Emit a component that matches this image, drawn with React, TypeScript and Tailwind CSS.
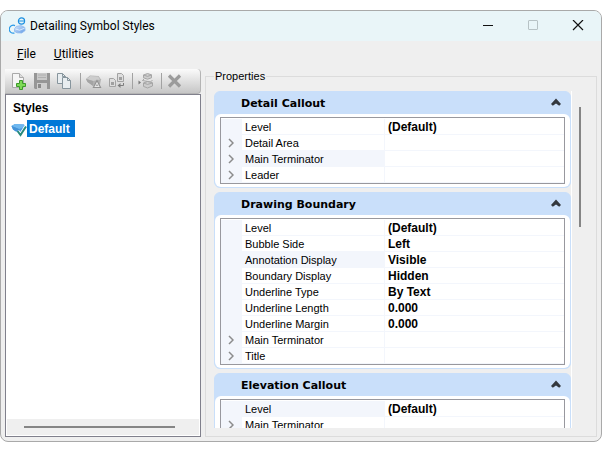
import { useState } from 'react'
import type { ReactNode } from 'react'

type Row = { name: string; value?: string; expandable?: boolean; tinted?: boolean }
type Section = { title: string; rows: Row[] }

const sections: Section[] = [
  {
    title: 'Detail Callout',
    rows: [
      { name: 'Level', value: '(Default)' },
      { name: 'Detail Area', expandable: true },
      { name: 'Main Terminator', expandable: true, tinted: true },
      { name: 'Leader', expandable: true }
    ]
  },
  {
    title: 'Drawing Boundary',
    rows: [
      { name: 'Level', value: '(Default)' },
      { name: 'Bubble Side', value: 'Left' },
      { name: 'Annotation Display', value: 'Visible', tinted: true },
      { name: 'Boundary Display', value: 'Hidden' },
      { name: 'Underline Type', value: 'By Text' },
      { name: 'Underline Length', value: '0.000' },
      { name: 'Underline Margin', value: '0.000' },
      { name: 'Main Terminator', expandable: true },
      { name: 'Title', expandable: true }
    ]
  },
  {
    title: 'Elevation Callout',
    rows: [
      { name: 'Level', value: '(Default)', tinted: true },
      { name: 'Main Terminator', expandable: true }
    ]
  }
]

function AppIcon() {
  return (
    <svg width="18" height="18" viewBox="0 0 18 18" fill="none">
      <defs>
        <linearGradient id="cloud" x1="0" y1="0" x2="1" y2="1">
          <stop offset="0" stopColor="#d6e6fb" />
          <stop offset="1" stopColor="#5f9be6" />
        </linearGradient>
      </defs>
      <circle cx="12.5" cy="4" r="3.1" stroke="#1b8fe0" strokeWidth="1.2" />
      <path d="M9.4 4h6.2" stroke="#1b8fe0" strokeWidth="1.2" />
      <path d="M6 8.6A4 4 0 1 0 5.5 16" stroke="#2b9ae8" strokeWidth="1.2" />
      <path d="M5.5 12l1.8-2.6 4.7-.8 3.8 1.8.3 3.2-3.4 2.4-4.6-.2-2.6-1.4z" fill="url(#cloud)" stroke="#8db8ee" strokeWidth=".8" />
      <path d="M6.5 12l4 1.2 5-2" stroke="#eef5fe" strokeWidth=".8" />
    </svg>
  )
}

function NewIcon() {
  return (
    <svg width="18" height="18" viewBox="0 0 18 18" fill="none">
      <path d="M2.5 1.5h7l4 4v10h-11z" fill="#f5f5f5" stroke="#a9a9a9" />
      <path d="M9.5 1.5v4h4" fill="#ddd" stroke="#a9a9a9" />
      <path d="M9.5 8.5h3v3h3v3h-3v3h-3v-3h-3v-3h3z" fill="#7ed957" stroke="#3c9a2a" />
    </svg>
  )
}

function SaveIcon() {
  return (
    <svg width="18" height="18" viewBox="0 0 18 18">
      <path d="M1 1h16v16H2l-1-1z" fill="#969696" />
      <path d="M4 1h10v7H4z" fill="#c9c9c9" />
      <path d="M5 3h8M5 5.5h8" stroke="#b0b0b0" />
      <path d="M4 11h10v6H4z" fill="#cecece" />
      <path d="M5 12h3v4H5z" fill="#8a8a8a" />
    </svg>
  )
}

function CopyIcon() {
  return (
    <svg width="18" height="18" viewBox="0 0 18 18" fill="#e8edf0" stroke="#87959d">
      <path d="M1.5 1.5h5l3 3v7h-8z" />
      <path d="M6.5 1.5v3h3" fill="none" />
      <path d="M6.500 5.500h5l3 3v8h-8z" />
      <path d="M11.500 5.500v3h3" fill="none" />
    </svg>
  )
}

function RenameIcon() {
  return (
    <svg width="18" height="18" viewBox="0 0 18 18">
      <path d="M1 7l4-3.5 8.5.5 2.5 3.5-1 5-6.5 1.5L2.5 10z" fill="#b0b0b0" />
      <path d="M1.5 7l3.8-3 7.8.6L15.2 7.5 8 9z" fill="#cdcdcd" />
      <path d="M1 7l7 2v5L2.5 10z" fill="#a4a4a4" />
      <path d="M12 8.5l3.6 7H8.4z" fill="#e6e6e6" stroke="#929292" strokeWidth="1.1" />
      <path d="M10.8 13.2h2.4" stroke="#929292" />
    </svg>
  )
}

function UpdateIcon() {
  return (
    <svg width="18" height="18" viewBox="0 0 18 18" fill="#dedede" stroke="#a3a3a3">
      <path d="M1.5 6.5h4l2 2v6h-6z" />
      <path d="M9.5 1.5h4l2 2v6h-6z" />
      <path d="M3 10h3v3H3zM11 5h3v3h-3z" fill="#a0a0a0" stroke="none" />
      <path d="M15.5 11v2.5h-4" fill="none" stroke="#7d7d7d" />
      <path d="M12.5 11v5l-3-2.5z" fill="#7d7d7d" stroke="none" />
    </svg>
  )
}

function SwapIcon() {
  return (
    <svg width="18" height="18" viewBox="0 0 18 18" fill="#cdcdcd" stroke="#a0a0a0" strokeWidth=".9">
      <path d="M6.5 3l4-1.5 4 1.3v3l-4 1.4-4-1.4z" />
      <path d="M6.5 3l4 1.4 4-1.4" fill="none" />
      <path d="M7 7L5.5 8.5l8 1.5 2-2" fill="none" />
      <path d="M6.5 11l4-1.5 5 1.3v3.2l-5 2-4-1.6z" />
      <path d="M6.5 11l4 1.4 5-1.4" fill="none" />
      <path d="M1.5 8.5v4L4 10.5z" fill="#777" stroke="none" />
    </svg>
  )
}

function DeleteIcon() {
  return (
    <svg width="18" height="18" viewBox="0 0 18 18">
      <path d="M3 3.5l11 11M14 3.5l-11 11" stroke="#9b9b9b" strokeWidth="3.2" />
    </svg>
  )
}

function StyleIcon() {
  return (
    <svg width="16" height="16" viewBox="0 0 16 16" fill="none">
      <path d="M.5 5L4 3l9 .5L14 6l-1 4-5 2.5-6-4z" fill="#4c9be0" />
      <path d="M.5 5L4 3l9 .5L14 6 8 8z" fill="#6fb8f0" />
      <path d="M.5 5L8 8v4.5l-6-4z" fill="#4593d8" />
      <path d="M6.5 10l3 4L15 5.5" stroke="#fff" strokeWidth="3.6" />
      <path d="M6.5 10l3 4L15 5.5" stroke="#258a7c" strokeWidth="2" />
    </svg>
  )
}

function ToolButton({ label, children }: { label: string; children: ReactNode }) {
  return (
    <button type="button" aria-label={label} className="flex h-[22px] w-[23px] items-center justify-center">
      {children}
    </button>
  )
}

function Divider() {
  return <span className="mr-px ml-1 h-4 w-px bg-[#a2a2a2]" />
}

function PropertySection({ title, rows }: Section) {
  const [open, setOpen] = useState(true)

  return (
    <section className="shrink-0 rounded-md border border-[#c9dffa] bg-[#c9dffa]">
      <header className="flex h-[22px] items-center justify-between pr-2 pl-[26px]">
        <h2 className="pt-px font-['DejaVu_Sans'] text-[11px] leading-4 font-bold">{title}</h2>
        <button type="button" aria-label={title} aria-expanded={open} onClick={() => setOpen(!open)}>
          <svg width="12" height="10" viewBox="0 0 12 10">
            <path d="M1 6L6 .5 11 6 9.200 7.700 6 5.400 2.800 7.700z" fill="#33383e" />
          </svg>
        </button>
      </header>
      {open && (
        <div className="rounded-md bg-white px-[5px] py-[3px]">
          <div className="border border-[#98989e] pt-px">
            <table className="w-full table-fixed border-separate border-spacing-0 text-left leading-[14px]">
              <colgroup>
                <col className="w-[21px]" />
                <col className="w-[143px]" />
                <col />
              </colgroup>
              <tbody>
                {rows.map((row) => (
                  <tr key={row.name} className="h-4">
                    <td className="bg-[#f3f6fc] p-0">
                      {row.expandable && (
                        <svg width="6" height="10" viewBox="0 0 6 10" className="ml-[7px]">
                          <path d="M1 1l4 4-4 4" fill="none" stroke="#8c8c8c" strokeWidth="1.5" />
                        </svg>
                      )}
                    </td>
                    <th
                      scope="row"
                      className={`border-r border-b border-[#f3f6fc] p-0 pt-px pl-[3px] text-[11px] font-normal ${row.tinted ? 'bg-[#f3f6fc]' : ''}`}
                    >
                      {row.name}
                    </th>
                    <td className="border-b border-[#f3f6fc] p-0 pt-px pl-[3px] text-[12px] font-bold">{row.value}</td>
                  </tr>
                ))}
              </tbody>
            </table>
          </div>
        </div>
      )}
    </section>
  )
}

export default function App() {
  return (
    <div className="h-screen bg-white py-[10px] font-['Liberation_Sans',sans-serif] text-black">
      <div className="flex h-full flex-col overflow-hidden rounded-lg border border-[#a9a9a9] bg-[#efefef]">
        {/* Title bar */}
        <header className="flex h-[30px] shrink-0 items-center bg-[#e9f5f8] pr-[17px] pl-2">
          <AppIcon />
          <h1 className="ml-[3px] flex-1 font-['Roboto',sans-serif] text-[12px] leading-4">Detailing Symbol Styles</h1>
          <div className="flex items-center gap-[33px]">
            <button type="button" aria-label="Minimize">
              <svg width="12" height="12" viewBox="0 0 12 12">
                <path d="M1 5.5h10" stroke="#111" />
              </svg>
            </button>
            <button type="button" aria-label="Maximize" disabled>
              <svg width="12" height="12" viewBox="0 0 12 12">
                <rect x="1.5" y=".5" width="9" height="9" rx=".5" fill="none" stroke="#b7c2c5" />
              </svg>
            </button>
            <button type="button" aria-label="Close">
              <svg width="12" height="12" viewBox="0 0 12 12">
                <path d="M1 0l10 10M11 0L1 10" stroke="#111" strokeWidth="1.2" />
              </svg>
            </button>
          </div>
        </header>

        {/* Menu */}
        <nav className="flex h-7 shrink-0 items-center gap-[18px] pb-0.5 pl-4 font-['Roboto',sans-serif] text-[12px] leading-4">
          <button type="button"><u>F</u>ile</button>
          <button type="button"><u>U</u>tilities</button>
        </nav>

        <div className="flex min-h-0 flex-1 gap-1 px-1 pb-1">
          {/* Styles list */}
          <div className="flex w-[196px] shrink-0 flex-col">
            <div className="flex h-[25px] shrink-0 items-center rounded-r-sm border-r border-b border-[#b4b4b4] bg-linear-to-b from-[#fbfbfb] to-[#c6c6c6] pl-0.5">
              <ToolButton label="New"><NewIcon /></ToolButton>
              <ToolButton label="Save"><SaveIcon /></ToolButton>
              <ToolButton label="Copy"><CopyIcon /></ToolButton>
              <Divider />
              <ToolButton label="Rename"><RenameIcon /></ToolButton>
              <ToolButton label="Update"><UpdateIcon /></ToolButton>
              <Divider />
              <ToolButton label="Replace"><SwapIcon /></ToolButton>
              <Divider />
              <ToolButton label="Delete"><DeleteIcon /></ToolButton>
            </div>
            <div className="flex flex-1 flex-col border border-[#80808c] bg-white p-px text-[12px]">
              <h2 className="mt-1 pl-[6px] leading-4 font-bold">Styles</h2>
              <ul className="mt-1 flex-1 pl-1">
                <li className="flex items-center">
                  <StyleIcon />
                  <button type="button" className="h-[17px] bg-[#0078d7] pr-[5px] pl-0.5 leading-4 font-bold text-white">
                    Default
                  </button>
                </li>
              </ul>
              <div className="flex h-4 items-center bg-[#efefef] pr-6 pl-[17px]">
                <div className="h-0.5 flex-1 bg-[#858585]" />
              </div>
            </div>
          </div>

          {/* Properties */}
          <fieldset className="flex min-w-0 flex-1 flex-col border border-[#dcdcdc] pb-2 pl-2">
            <legend className="px-px text-[11px] leading-[14px]">Properties</legend>
            <div className="flex h-full min-h-0 flex-1 pt-2">
              <div className="flex flex-1 flex-col gap-1 overflow-hidden border-r border-white">
                {sections.map((section) => (
                  <PropertySection key={section.title} {...section} />
                ))}
              </div>
              <div className="flex w-6 justify-center pt-4">
                <div className="mr-2 h-[120px] w-0.5 bg-[#858585]" />
              </div>
            </div>
          </fieldset>
        </div>
      </div>
    </div>
  )
}
